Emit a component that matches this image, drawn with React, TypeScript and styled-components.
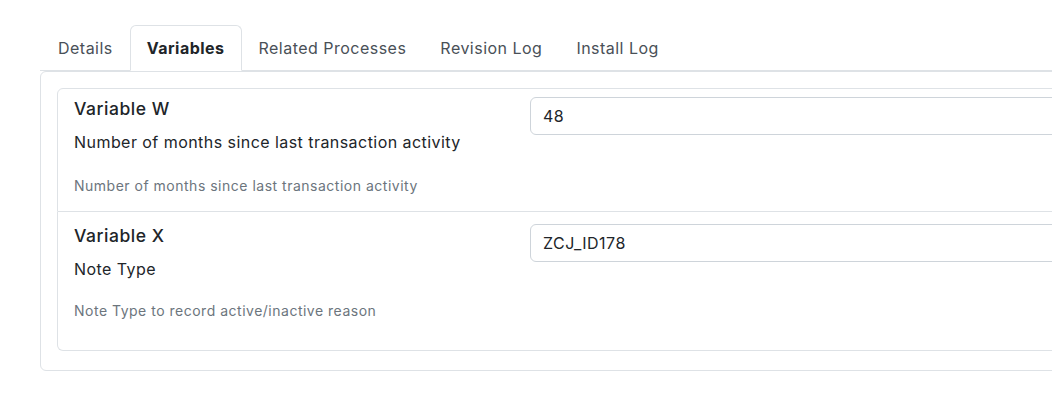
import React from 'react';
import styled, { createGlobalStyle } from 'styled-components';

const GlobalStyle = createGlobalStyle`
  html, body {
    margin: 0;
    background: #fff;
  }
  body {
    font-family: Inter, "Liberation Sans", Arial, sans-serif;
    color: #212529;
    letter-spacing: 0.034em;
  }
`;

const Viewport = styled.div`
  width: 100vw;
  height: 100vh;
  overflow: hidden;
`;

const Page = styled.div`
  width: 1140px;
  padding: 25px 0 0 40px;
`;

const TabBar = styled.div`
  display: flex;
  padding-left: 1px;
  border-bottom: 1px solid #dee2e6;
`;

const Tab = styled.div<{ $active?: boolean }>`
  padding: 10px 16px;
  margin-bottom: -1px;
  font-size: 16px;
  line-height: 24px;
  letter-spacing: 0.03em;
  border: 1px solid transparent;
  border-radius: 6px 6px 0 0;
  color: ${p => (p.$active ? '#212529' : '#495057')};
  font-weight: ${p => (p.$active ? 700 : 400)};
  ${p => p.$active && `
    background: #fff;
    border-color: #dee2e6 #dee2e6 #fff;
  `}
`;

const Panel = styled.div`
  border: 1px solid #dee2e6;
  border-radius: 6px;
  padding: 16px 0 19px 16px;
`;

const VariableList = styled.div`
  display: flex;
  flex-direction: column;
`;

const VariableItem = styled.div<{ $pad: string }>`
  display: grid;
  grid-template-columns: 456px 1fr;
  padding: ${p => p.$pad};
  border: 1px solid #dee2e6;
  border-top-width: 0;

  &:first-child {
    border-top-width: 1px;
    border-top-left-radius: 6px;
  }
  &:last-child {
    border-bottom-left-radius: 6px;
  }
`;

const Info = styled.div`
  display: flex;
  flex-direction: column;
`;

const Name = styled.div`
  font-size: 17.5px;
  line-height: 21px;
  font-weight: 500;
  color: #212529;
`;

const Label = styled.div<{ $gap: number }>`
  margin-top: 11px;
  margin-bottom: ${p => p.$gap}px;
  font-size: 16px;
  line-height: 24px;
  letter-spacing: 0.028em;
`;

const Hint = styled.div`
  font-size: 14px;
  line-height: 21px;
  color: #6c757d;
  letter-spacing: 0.036em;
`;

const ValueInput = styled.input`
  align-self: start;
  margin-top: -1px;
  height: 38px;
  box-sizing: border-box;
  padding: 6px 12px;
  font-family: inherit;
  font-size: 16px;
  letter-spacing: 0.03em;
  color: #212529;
  border: 1px solid #ced4da;
  border-radius: 6px;
  background: #fff;
  outline: none;
`;

const tabs = ['Details', 'Variables', 'Related Processes', 'Revision Log', 'Install Log'];

const variables = [
  {
    name: 'Variable W',
    label: 'Number of months since last transaction activity',
    hint: 'Number of months since last transaction activity',
    value: '48',
    pad: '9px 0 15px 16px',
    gap: 21,
  },
  {
    name: 'Variable X',
    label: 'Note Type',
    hint: 'Note Type to record active/inactive reason',
    value: 'ZCJ_ID178',
    pad: '13px 0 29px 16px',
    gap: 19,
  },
];

export default function App() {
  return (
    <Viewport>
      <GlobalStyle />
      <Page>
        <TabBar>
          {tabs.map(t => (
            <Tab key={t} $active={t === 'Variables'}>{t}</Tab>
          ))}
        </TabBar>
        <Panel>
          <VariableList>
            {variables.map(v => (
              <VariableItem key={v.name} $pad={v.pad}>
                <Info>
                  <Name>{v.name}</Name>
                  <Label $gap={v.gap}>{v.label}</Label>
                  <Hint>{v.hint}</Hint>
                </Info>
                <ValueInput defaultValue={v.value} readOnly />
              </VariableItem>
            ))}
          </VariableList>
        </Panel>
      </Page>
    </Viewport>
  );
}
